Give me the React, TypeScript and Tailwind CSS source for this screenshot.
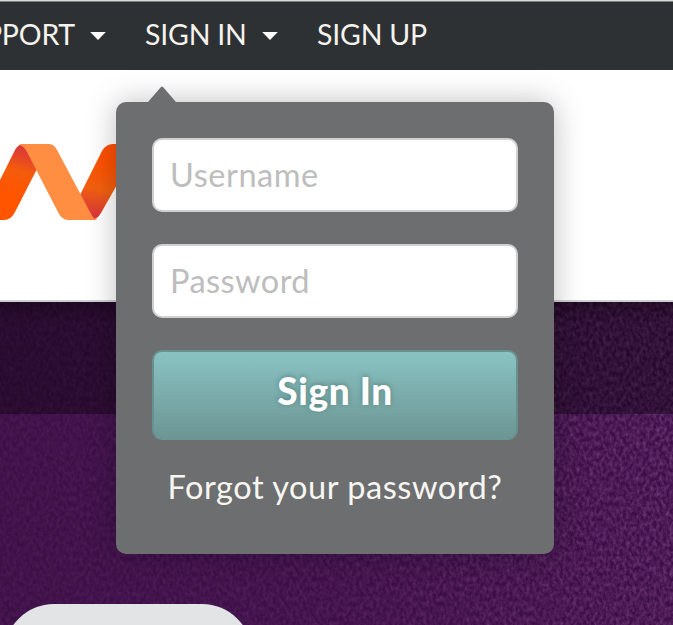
import React from "react";

function Caret() {
  return (
    <svg className="block h-2 w-4 shrink-0" viewBox="0 0 16 8">
      <path d="M0.2 0H15.8L8 8Z" fill="#fff" />
    </svg>
  );
}

function Header() {
  return (
    <header className="h-[70px] shrink-0 border-t border-[#d3dad7] bg-[#2d3134] shadow-[inset_0_1px_0_#7c8281]">
      <nav className="flex h-[66px] items-center whitespace-nowrap text-[28.5px] text-[#f6f3ee]">
        <a className="-ml-[59px] w-[134px] shrink-0 text-right tracking-[-0.2px]">PPORT</a>
        <span className="ml-[15px] mt-1"><Caret /></span>
        <a className="ml-[39px] w-[101px] shrink-0 tracking-[-0.2px]">SIGN IN</a>
        <span className="ml-[16px] mt-1"><Caret /></span>
        <a className="ml-[39px] tracking-[-0.2px]">SIGN UP</a>
      </nav>
    </header>
  );
}

function Logo() {
  return (
    <svg className="block h-[76px] w-[140px]" viewBox="0 144 140 76">
      <defs>
        <linearGradient id="left" x1="24" y1="146" x2="8" y2="205" gradientUnits="userSpaceOnUse">
          <stop offset="0" stopColor="#d8343c" />
          <stop offset="0.42" stopColor="#f45c0c" />
          <stop offset="0.8" stopColor="#ff5500" />
        </linearGradient>
        <linearGradient id="right" x1="92" y1="217" x2="110" y2="146" gradientUnits="userSpaceOnUse">
          <stop offset="0" stopColor="#d8343c" />
          <stop offset="0.38" stopColor="#f2600f" />
          <stop offset="0.8" stopColor="#ff5000" />
        </linearGradient>
      </defs>
      <path d="M-20 220L-1 182L15 150Q18 144 24 144L37 169L15 212Q11 220 4 220Z" fill="url(#left)" />
      <path d="M80 195L102 151Q106 144 113 144H140L101 213Q97 220 91 220Z" fill="url(#right)" />
      <path d="M21 144H49Q54 144 57 150L90 212Q94 220 98 220H68Q62 220 58 212L27 152Q24 146 19 145Z" fill="#ff8d42" />
    </svg>
  );
}

function Texture() {
  return (
    <svg className="block h-full w-full" preserveAspectRatio="none">
      <defs>
        <filter id="grain" x="0" y="0" width="100%" height="100%">
          <feTurbulence type="fractalNoise" baseFrequency="0.3 0.2" numOctaves="3" seed="7" />
          <feColorMatrix values="0 0 0 0 0.42  0 0 0 0 0.15  0 0 0 0 0.47  1 0 0 0 -0.3" />
        </filter>
        <linearGradient id="fade">
          <stop offset="0" stopColor="#fff" stopOpacity="0.22" />
          <stop offset="0.5" stopColor="#fff" stopOpacity="0.36" />
          <stop offset="1" stopColor="#fff" stopOpacity="0.75" />
        </linearGradient>
        <mask id="fadeMask">
          <rect width="100%" height="100%" fill="url(#fade)" />
        </mask>
      </defs>
      <g mask="url(#fadeMask)">
        <rect width="100%" height="100%" filter="url(#grain)" />
      </g>
    </svg>
  );
}

function SignInMenu() {
  return (
    <div className="absolute left-[116px] top-[102px] h-[452px] w-[438px] rounded-[10px] bg-[#6d6e70] px-9 pt-9 shadow-[0_0_30px_rgba(0,0,0,0.26)]">
      <svg className="absolute -top-4 left-8 h-4 w-7" viewBox="0 0 28 16">
        <path d="M0 16L13 1Q14 0 15 1L28 16Z" fill="#6d6e70" />
      </svg>
      <form className="flex flex-col">
        <input
          className="h-[74px] w-full rounded-[10px] border-2 border-[#d0d0d1] bg-white px-4 pb-0.5 text-[32.5px] tracking-[0.55px] outline-none placeholder:text-[#bdbdbd]"
          placeholder="Username"
        />
        <input
          className="mt-8 h-[74px] w-full rounded-[10px] border-2 border-[#d0d0d1] bg-white px-4 pb-0.5 text-[32.5px] tracking-[0.45px] outline-none placeholder:text-[#bdbdbd]"
          placeholder="Password"
        />
        <button
          type="button"
          className="mt-8 h-[90px] w-full rounded-[10px] border-2 border-[#66918f] border-b-[#6c9694] bg-linear-to-b from-[#8ac3c3] to-[#6c9694] pb-2 text-[37px] font-black tracking-[0.6px] text-white [text-shadow:0_-1px_5px_rgba(50,90,90,0.5)]"
        >
          Sign In
        </button>
        <a className="mt-[23px] whitespace-nowrap text-center text-[32.5px] leading-[48px] tracking-[0.55px] text-[#f8f6f0]">Forgot your password?</a>
      </form>
    </div>
  );
}

export default function App() {
  return (
    <div className="relative flex h-[625px] w-[673px] flex-col overflow-hidden bg-white font-[Lato,'Open_Sans',sans-serif]">
      <Header />
      <div className="h-[232px] shrink-0 border-b-2 border-[#cfced2] bg-white pt-[74px]">
        <Logo />
      </div>
      <main className="relative flex h-[323px] flex-col bg-[#3d0f47]">
        <div className="absolute inset-0"><Texture /></div>
        <div className="relative h-28 shrink-0 bg-black/35 bg-linear-to-b from-black/25 via-transparent via-20% to-transparent" />
        <div className="relative ml-1 mt-[190px] h-[100px] w-[248px] shrink-0 rounded-[50px] bg-[#e3e4e6]" />
      </main>
      <SignInMenu />
    </div>
  );
}
